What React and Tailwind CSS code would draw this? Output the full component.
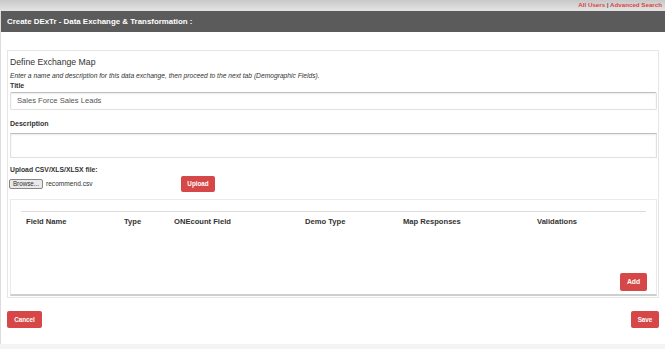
export default function App() {
  const font = { fontFamily: '"Liberation Sans", Arial, sans-serif' }
  return (
    <div className="w-[665px] h-[349px] overflow-hidden bg-white text-[#333]" style={font}>
      <div className="h-[11px] bg-gradient-to-b from-[#c8c8c8] to-[#e4e4e4] flex items-center justify-end pr-[3px]">
        <span className="text-[6.2px] font-bold text-[#d9463f] leading-none">
          All Users <span className="text-[#555]">|</span> Advanced Search
        </span>
      </div>
      <div className="border-l border-[#ddd] h-[333px] flex flex-col">
        <div className="h-[21px] bg-[#5b5b5b] flex items-center pl-[6px]">
          <span className="text-white font-bold text-[7.9px]">Create DExTr - Data Exchange &amp; Transformation :</span>
        </div>
        <div className="px-[6px] pt-[18px]">
          <div className="border border-[#e6e6e6] pl-[2px] pr-[1px] pt-[6px] pb-[1px]">
            <div className="text-[8.7px] leading-[10px]">Define Exchange Map</div>
            <div className="text-[6.7px] italic mt-[5px] leading-[8px]">
              Enter a name and description for this data exchange, then proceed to the next tab (Demographic Fields).
            </div>
            <div className="text-[7px] font-bold leading-[8px] mt-[2px]">Title</div>
            <div className="h-[18px] mt-[2px] border border-[#e0e0e0] border-t-[#bdbdbd] rounded-[2px] shadow-[inset_0_1px_2px_rgba(0,0,0,0.08)] flex items-center pl-[6px] text-[7.6px] text-[#555]">
              Sales Force Sales Leads
            </div>
            <div className="text-[7px] font-bold leading-[8px] mt-[10px]">Description</div>
            <div className="h-[25px] mt-[5px] border border-[#e0e0e0] border-t-[#bdbdbd] shadow-[inset_0_1px_2px_rgba(0,0,0,0.08)]"></div>
            <div className="text-[6.8px] font-bold leading-[8px] mt-[8px]">Upload CSV/XLS/XLSX file:</div>
            <div className="flex items-center mt-[2px] h-[16px]">
              <div className="w-[34px] h-[10px] border border-[#888] rounded-[2px] bg-[#e9e9e9] text-[6.3px] leading-none flex items-center justify-center -ml-[1px]">Browse...</div>
              <span className="text-[6.6px] ml-[3px] w-[135px]">recommend.csv</span>
              <button className="w-[34px] h-[16px] bg-[#d64747] rounded-[2px] text-white text-[6.3px] font-bold">Upload</button>
            </div>
            <div className="mt-[7px] border border-[#eaeaea] border-b-[#cfcfcf] border-b-2 h-[97px] flex flex-col">
              <div className="mx-[10px] mt-[11px] border-t border-[#dcdcdc] relative">
                <div className="flex text-[7.6px] font-bold h-[19px] items-center pl-[5px]">
                  <span className="w-[98px]">Field Name</span>
                  <span className="w-[50px]">Type</span>
                  <span className="w-[131px]">ONEcount Field</span>
                  <span className="w-[98px]">Demo Type</span>
                  <span className="w-[134px]">Map Responses</span>
                  <span>Validations</span>
                </div>
              </div>
              <div className="flex-1 flex items-end justify-end pr-[9px] pb-[3px]">
                <button className="w-[27px] h-[18px] bg-[#d64747] rounded-[2px] text-white text-[6.8px] font-bold">Add</button>
              </div>
            </div>
          </div>
          <div className="flex justify-between mt-[13px]">
            <button className="w-[35px] h-[17px] bg-[#d64747] rounded-[2px] text-white text-[6.3px] font-bold">Cancel</button>
            <button className="w-[28px] h-[17px] bg-[#d64747] rounded-[2px] text-white text-[6.3px] font-bold">Save</button>
          </div>
        </div>
      </div>
      <div className="h-[5px] bg-[#f4f4f4]"></div>
    </div>
  )
}
